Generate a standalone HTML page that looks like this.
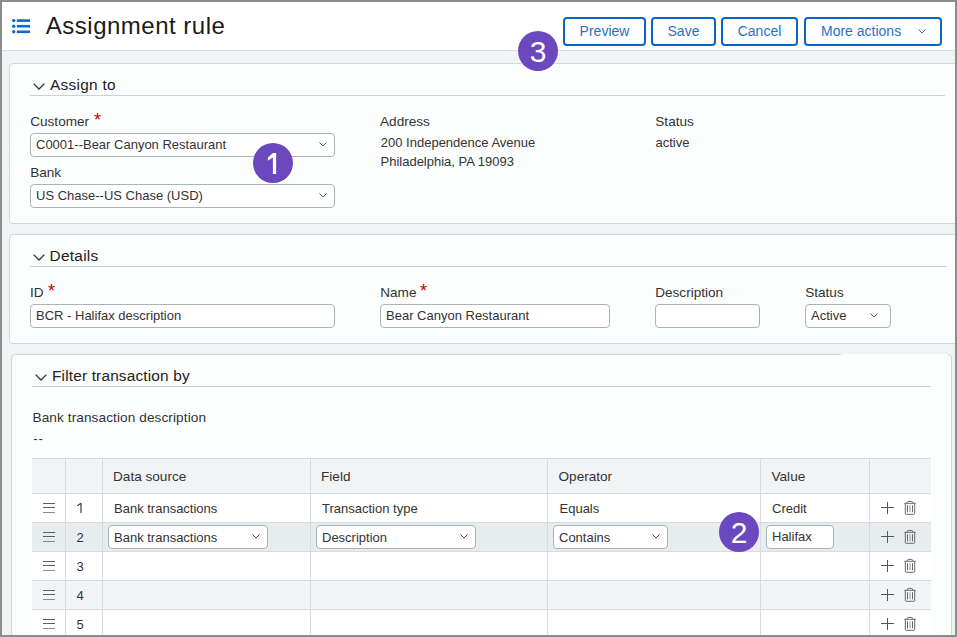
<!DOCTYPE html>
<html><head><meta charset="utf-8"><style>
html,body{margin:0;padding:0;width:957px;height:637px;overflow:hidden;font-family:"Liberation Sans", sans-serif;}
.t{position:absolute;white-space:nowrap;line-height:1;}
.btn{position:absolute;height:29px;box-sizing:border-box;border:2px solid #0a66c2;border-radius:4px;background:#fff;color:#2a6fc2;font-size:14px;line-height:25px;text-align:center;}
.badge{position:absolute;width:40px;height:40px;border-radius:50%;background:#6b48bd;color:#fff;font-size:30px;line-height:42px;text-align:center;}
.ast{position:absolute;color:#c40000;font-size:18px;line-height:18px;margin-top:1px;}
</style></head><body>
<div style="position:absolute;left:0;top:0;width:957px;height:637px;background:#f1f4f5"></div>
<div style="position:absolute;left:0px;top:0px;width:957px;height:51px;box-sizing:border-box;background:#fff;border-bottom:1px solid #d9dfe3;"></div>
<div style="position:absolute;left:10px;top:16px;width:22px;height:20px;line-height:0"><svg width="22" height="20"><circle cx="3.75" cy="4.60" r="1.7" fill="#0b6bc8"/><rect x="6.8" y="3.30" width="13.2" height="2.6" fill="#0b6bc8"/><circle cx="3.75" cy="10.20" r="1.7" fill="#0b6bc8"/><rect x="6.8" y="8.90" width="13.2" height="2.6" fill="#0b6bc8"/><circle cx="3.75" cy="15.80" r="1.7" fill="#0b6bc8"/><rect x="6.8" y="14.50" width="13.2" height="2.6" fill="#0b6bc8"/></svg></div>
<div class="t" style="left:45.8px;top:13.68px;font-size:24px;color:#1b1b1b;letter-spacing:0.5px">Assignment rule</div>
<div class="btn" style="left:563px;top:17px;width:83px;">Preview</div>
<div class="btn" style="left:651px;top:17px;width:65px;">Save</div>
<div class="btn" style="left:721px;top:17px;width:77px;">Cancel</div>
<div class="btn" style="left:804px;top:17px;width:138px;text-align:left;padding-left:15px;">More actions</div>
<div style="position:absolute;left:918px;top:28.5px;width:8px;height:5px;line-height:0"><svg width="8" height="5" viewBox="0 0 8 5"><path d="M0.5 0.5 L4 4 L7.5 0.5" fill="none" stroke="#2f6fbf" stroke-width="1"/></svg></div>
<div style="position:absolute;left:9px;top:63px;width:1000px;height:161px;box-sizing:border-box;background:#fcfdfd;border:1px solid #cfd8dc;border-radius:4px;"></div>
<div style="position:absolute;left:33px;top:83px;width:12px;height:7px;line-height:0"><svg width="12" height="7" viewBox="0 0 12 7"><path d="M0.6 0.6 L6 6 L11.4 0.6" fill="none" stroke="#333" stroke-width="1.3"/></svg></div>
<div class="t" style="left:50px;top:76.96px;font-size:15.4px;color:#222;letter-spacing:0.28px">Assign to</div>
<div style="position:absolute;left:30px;top:95px;width:915px;height:1px;box-sizing:border-box;background:#c9d2d8;"></div>
<div class="t" style="left:30.2px;top:114.69px;font-size:13.6px;color:#333;">Customer</div>
<div class="ast" style="left:94px;top:110px">*</div>
<div style="position:absolute;left:30px;top:133px;width:305px;height:24px;box-sizing:border-box;background:#fff;border:1px solid #a9b3ba;border-radius:4px;"></div>
<div class="t" style="left:36px;top:138.00px;font-size:13px;color:#333;">C0001--Bear Canyon Restaurant</div>
<div style="position:absolute;left:318.7px;top:142px;width:8px;height:5px;line-height:0"><svg width="8" height="5" viewBox="0 0 8 5"><path d="M0.5 0.5 L4 4 L7.5 0.5" fill="none" stroke="#555" stroke-width="1"/></svg></div>
<div class="t" style="left:30.2px;top:166.29px;font-size:13.6px;color:#333;">Bank</div>
<div style="position:absolute;left:30px;top:184px;width:305px;height:24px;box-sizing:border-box;background:#fff;border:1px solid #a9b3ba;border-radius:4px;"></div>
<div class="t" style="left:36px;top:189.00px;font-size:13px;color:#333;">US Chase--US Chase (USD)</div>
<div style="position:absolute;left:318.7px;top:193px;width:8px;height:5px;line-height:0"><svg width="8" height="5" viewBox="0 0 8 5"><path d="M0.5 0.5 L4 4 L7.5 0.5" fill="none" stroke="#555" stroke-width="1"/></svg></div>
<div class="t" style="left:380px;top:114.69px;font-size:13.6px;color:#333;">Address</div>
<div class="t" style="left:380.8px;top:135.50px;font-size:13px;color:#333;">200 Independence Avenue</div>
<div class="t" style="left:380.5px;top:155.00px;font-size:13px;color:#333;">Philadelphia, PA 19093</div>
<div class="t" style="left:655.3px;top:114.69px;font-size:13.6px;color:#333;">Status</div>
<div class="t" style="left:655.5px;top:135.50px;font-size:13px;color:#333;">active</div>
<div style="position:absolute;left:9px;top:234px;width:1000px;height:110px;box-sizing:border-box;background:#fcfdfd;border:1px solid #cfd8dc;border-radius:4px;"></div>
<div style="position:absolute;left:33px;top:254px;width:12px;height:7px;line-height:0"><svg width="12" height="7" viewBox="0 0 12 7"><path d="M0.6 0.6 L6 6 L11.4 0.6" fill="none" stroke="#333" stroke-width="1.3"/></svg></div>
<div class="t" style="left:49.5px;top:247.96px;font-size:15.4px;color:#222;letter-spacing:0.28px">Details</div>
<div style="position:absolute;left:30px;top:266px;width:917px;height:1px;box-sizing:border-box;background:#c9d2d8;"></div>
<div class="t" style="left:30px;top:286.29px;font-size:13.6px;color:#333;">ID</div>
<div class="ast" style="left:48px;top:281px">*</div>
<div style="position:absolute;left:30px;top:304px;width:305px;height:24px;box-sizing:border-box;background:#fff;border:1px solid #a9b3ba;border-radius:4px;"></div>
<div class="t" style="left:36px;top:309.00px;font-size:13px;color:#333;">BCR - Halifax description</div>
<div class="t" style="left:380.2px;top:286.29px;font-size:13.6px;color:#333;">Name</div>
<div class="ast" style="left:420px;top:281px">*</div>
<div style="position:absolute;left:380px;top:304px;width:230px;height:24px;box-sizing:border-box;background:#fff;border:1px solid #a9b3ba;border-radius:4px;"></div>
<div class="t" style="left:386px;top:309.00px;font-size:13px;color:#333;">Bear Canyon Restaurant</div>
<div class="t" style="left:655.2px;top:286.29px;font-size:13.6px;color:#333;">Description</div>
<div style="position:absolute;left:655px;top:304px;width:105px;height:24px;box-sizing:border-box;background:#fff;border:1px solid #a9b3ba;border-radius:4px;"></div>
<div class="t" style="left:805.2px;top:286.29px;font-size:13.6px;color:#333;">Status</div>
<div style="position:absolute;left:805px;top:304px;width:86px;height:24px;box-sizing:border-box;background:#fff;border:1px solid #a9b3ba;border-radius:4px;"></div>
<div class="t" style="left:811px;top:309.00px;font-size:13px;color:#333;">Active</div>
<div style="position:absolute;left:870.2px;top:313px;width:8px;height:5px;line-height:0"><svg width="8" height="5" viewBox="0 0 8 5"><path d="M0.5 0.5 L4 4 L7.5 0.5" fill="none" stroke="#555" stroke-width="1"/></svg></div>
<div style="position:absolute;left:11px;top:354px;width:941px;height:400px;box-sizing:border-box;background:#fcfdfd;border:1px solid #cfd8dc;border-radius:4px;"></div>
<div style="position:absolute;left:841px;top:354px;width:107px;height:1px;box-sizing:border-box;background:#fcfdfd;"></div>
<div style="position:absolute;left:35px;top:374px;width:12px;height:7px;line-height:0"><svg width="12" height="7" viewBox="0 0 12 7"><path d="M0.6 0.6 L6 6 L11.4 0.6" fill="none" stroke="#333" stroke-width="1.3"/></svg></div>
<div class="t" style="left:52px;top:367.96px;font-size:15.4px;color:#222;letter-spacing:0.17px">Filter transaction by</div>
<div style="position:absolute;left:32px;top:386px;width:899px;height:1px;box-sizing:border-box;background:#c9d2d8;"></div>
<div class="t" style="left:32.5px;top:410.89px;font-size:13.6px;color:#333;letter-spacing:0.1px">Bank transaction description</div>
<div class="t" style="left:33.3px;top:432.00px;font-size:13px;color:#333;letter-spacing:0.8px">--</div>
<div style="position:absolute;left:32px;top:458px;width:899px;height:36px;box-sizing:border-box;background:#f1f3f5;border-top:1px solid #d5dbe0;border-bottom:1px solid #d5dbe0;"></div>
<div style="position:absolute;left:32px;top:494px;width:899px;height:29px;box-sizing:border-box;background:#fff;border-bottom:1px solid #d5dbe0;"></div>
<div style="position:absolute;left:32px;top:523px;width:899px;height:29px;box-sizing:border-box;background:#e7ecef;border-bottom:1px solid #d5dbe0;"></div>
<div style="position:absolute;left:32px;top:552px;width:899px;height:29px;box-sizing:border-box;background:#fff;border-bottom:1px solid #d5dbe0;"></div>
<div style="position:absolute;left:32px;top:581px;width:899px;height:29px;box-sizing:border-box;background:#f2f4f6;border-bottom:1px solid #d5dbe0;"></div>
<div style="position:absolute;left:32px;top:610px;width:899px;height:29px;box-sizing:border-box;background:#fff;border-bottom:1px solid #d5dbe0;"></div>
<div style="position:absolute;left:65px;top:458px;width:1px;height:179px;box-sizing:border-box;background:#d5dbe0;"></div>
<div style="position:absolute;left:102px;top:458px;width:1px;height:179px;box-sizing:border-box;background:#d5dbe0;"></div>
<div style="position:absolute;left:310px;top:458px;width:1px;height:179px;box-sizing:border-box;background:#d5dbe0;"></div>
<div style="position:absolute;left:547px;top:458px;width:1px;height:179px;box-sizing:border-box;background:#d5dbe0;"></div>
<div style="position:absolute;left:760px;top:458px;width:1px;height:179px;box-sizing:border-box;background:#d5dbe0;"></div>
<div style="position:absolute;left:869px;top:458px;width:1px;height:179px;box-sizing:border-box;background:#d5dbe0;"></div>
<div class="t" style="left:113px;top:470.09px;font-size:13.6px;color:#333;">Data source</div>
<div class="t" style="left:321px;top:470.09px;font-size:13.6px;color:#333;">Field</div>
<div class="t" style="left:558.5px;top:470.09px;font-size:13.6px;color:#333;">Operator</div>
<div class="t" style="left:771.5px;top:470.09px;font-size:13.6px;color:#333;">Value</div>
<div style="position:absolute;left:43px;top:503px;width:12px;height:1px;box-sizing:border-box;background:#5e5e5e;"></div>
<div style="position:absolute;left:43px;top:507px;width:12px;height:1px;box-sizing:border-box;background:#5e5e5e;"></div>
<div style="position:absolute;left:43px;top:512px;width:12px;height:1px;box-sizing:border-box;background:#8a8a8a;"></div>
<div style="position:absolute;left:70px;top:498px;width:20px;height:20px;line-height:0"><svg width="20" height="20"><path d="M11.0 5 V15 M7.2 7.9 L11.0 5.2" fill="none" stroke="#333" stroke-width="1.15"/></svg></div>
<div style="position:absolute;left:881.3px;top:507px;width:12.5px;height:1px;box-sizing:border-box;background:#555;"></div>
<div style="position:absolute;left:887px;top:502px;width:1px;height:12px;box-sizing:border-box;background:#555;"></div>
<div style="position:absolute;left:903px;top:500px;width:14px;height:15px;line-height:0"><svg width="14" height="15" viewBox="0 0 14 15"><path d="M1.3 3.3 H12.7 M3.9 3.2 Q4.3 1.4 5.8 1.4 H8.2 Q9.7 1.4 10.1 3.2 M2.3 3.3 V13.4 Q2.3 14.3 3.2 14.3 H10.8 Q11.7 14.3 11.7 13.4 V3.3 M4.5 5.2 V12.3 M9.5 5.2 V12.3" fill="none" stroke="#6a6a6a" stroke-width="1"/><path d="M7 5.2 V12.3" stroke="#aaa" stroke-width="1.2"/></svg></div>
<div style="position:absolute;left:43px;top:532px;width:12px;height:1px;box-sizing:border-box;background:#5e5e5e;"></div>
<div style="position:absolute;left:43px;top:536px;width:12px;height:1px;box-sizing:border-box;background:#5e5e5e;"></div>
<div style="position:absolute;left:43px;top:541px;width:12px;height:1px;box-sizing:border-box;background:#8a8a8a;"></div>
<div class="t" style="left:76.5px;top:531.00px;font-size:13px;color:#333;">2</div>
<div style="position:absolute;left:881.3px;top:536px;width:12.5px;height:1px;box-sizing:border-box;background:#555;"></div>
<div style="position:absolute;left:887px;top:531px;width:1px;height:12px;box-sizing:border-box;background:#555;"></div>
<div style="position:absolute;left:903px;top:529px;width:14px;height:15px;line-height:0"><svg width="14" height="15" viewBox="0 0 14 15"><path d="M1.3 3.3 H12.7 M3.9 3.2 Q4.3 1.4 5.8 1.4 H8.2 Q9.7 1.4 10.1 3.2 M2.3 3.3 V13.4 Q2.3 14.3 3.2 14.3 H10.8 Q11.7 14.3 11.7 13.4 V3.3 M4.5 5.2 V12.3 M9.5 5.2 V12.3" fill="none" stroke="#6a6a6a" stroke-width="1"/><path d="M7 5.2 V12.3" stroke="#aaa" stroke-width="1.2"/></svg></div>
<div style="position:absolute;left:43px;top:561px;width:12px;height:1px;box-sizing:border-box;background:#5e5e5e;"></div>
<div style="position:absolute;left:43px;top:565px;width:12px;height:1px;box-sizing:border-box;background:#5e5e5e;"></div>
<div style="position:absolute;left:43px;top:570px;width:12px;height:1px;box-sizing:border-box;background:#8a8a8a;"></div>
<div class="t" style="left:76.5px;top:560.00px;font-size:13px;color:#333;">3</div>
<div style="position:absolute;left:881.3px;top:565px;width:12.5px;height:1px;box-sizing:border-box;background:#555;"></div>
<div style="position:absolute;left:887px;top:560px;width:1px;height:12px;box-sizing:border-box;background:#555;"></div>
<div style="position:absolute;left:903px;top:558px;width:14px;height:15px;line-height:0"><svg width="14" height="15" viewBox="0 0 14 15"><path d="M1.3 3.3 H12.7 M3.9 3.2 Q4.3 1.4 5.8 1.4 H8.2 Q9.7 1.4 10.1 3.2 M2.3 3.3 V13.4 Q2.3 14.3 3.2 14.3 H10.8 Q11.7 14.3 11.7 13.4 V3.3 M4.5 5.2 V12.3 M9.5 5.2 V12.3" fill="none" stroke="#6a6a6a" stroke-width="1"/><path d="M7 5.2 V12.3" stroke="#aaa" stroke-width="1.2"/></svg></div>
<div style="position:absolute;left:43px;top:590px;width:12px;height:1px;box-sizing:border-box;background:#5e5e5e;"></div>
<div style="position:absolute;left:43px;top:594px;width:12px;height:1px;box-sizing:border-box;background:#5e5e5e;"></div>
<div style="position:absolute;left:43px;top:599px;width:12px;height:1px;box-sizing:border-box;background:#8a8a8a;"></div>
<div class="t" style="left:76.5px;top:589.00px;font-size:13px;color:#333;">4</div>
<div style="position:absolute;left:881.3px;top:594px;width:12.5px;height:1px;box-sizing:border-box;background:#555;"></div>
<div style="position:absolute;left:887px;top:589px;width:1px;height:12px;box-sizing:border-box;background:#555;"></div>
<div style="position:absolute;left:903px;top:587px;width:14px;height:15px;line-height:0"><svg width="14" height="15" viewBox="0 0 14 15"><path d="M1.3 3.3 H12.7 M3.9 3.2 Q4.3 1.4 5.8 1.4 H8.2 Q9.7 1.4 10.1 3.2 M2.3 3.3 V13.4 Q2.3 14.3 3.2 14.3 H10.8 Q11.7 14.3 11.7 13.4 V3.3 M4.5 5.2 V12.3 M9.5 5.2 V12.3" fill="none" stroke="#6a6a6a" stroke-width="1"/><path d="M7 5.2 V12.3" stroke="#aaa" stroke-width="1.2"/></svg></div>
<div style="position:absolute;left:43px;top:619px;width:12px;height:1px;box-sizing:border-box;background:#5e5e5e;"></div>
<div style="position:absolute;left:43px;top:623px;width:12px;height:1px;box-sizing:border-box;background:#5e5e5e;"></div>
<div style="position:absolute;left:43px;top:628px;width:12px;height:1px;box-sizing:border-box;background:#8a8a8a;"></div>
<div class="t" style="left:76.5px;top:618.00px;font-size:13px;color:#333;">5</div>
<div style="position:absolute;left:881.3px;top:623px;width:12.5px;height:1px;box-sizing:border-box;background:#555;"></div>
<div style="position:absolute;left:887px;top:618px;width:1px;height:12px;box-sizing:border-box;background:#555;"></div>
<div style="position:absolute;left:903px;top:616px;width:14px;height:15px;line-height:0"><svg width="14" height="15" viewBox="0 0 14 15"><path d="M1.3 3.3 H12.7 M3.9 3.2 Q4.3 1.4 5.8 1.4 H8.2 Q9.7 1.4 10.1 3.2 M2.3 3.3 V13.4 Q2.3 14.3 3.2 14.3 H10.8 Q11.7 14.3 11.7 13.4 V3.3 M4.5 5.2 V12.3 M9.5 5.2 V12.3" fill="none" stroke="#6a6a6a" stroke-width="1"/><path d="M7 5.2 V12.3" stroke="#aaa" stroke-width="1.2"/></svg></div>
<div class="t" style="left:114px;top:502.00px;font-size:13px;color:#333;">Bank transactions</div>
<div class="t" style="left:322px;top:502.00px;font-size:13px;color:#333;">Transaction type</div>
<div class="t" style="left:559.5px;top:502.00px;font-size:13px;color:#333;">Equals</div>
<div class="t" style="left:772px;top:502.00px;font-size:13px;color:#333;">Credit</div>
<div style="position:absolute;left:108px;top:525px;width:160px;height:24px;box-sizing:border-box;background:#fff;border:1px solid #a9b3ba;border-radius:4px;"></div>
<div class="t" style="left:114px;top:531.20px;font-size:13px;color:#333;">Bank transactions</div>
<div style="position:absolute;left:251.7px;top:534px;width:8px;height:5px;line-height:0"><svg width="8" height="5" viewBox="0 0 8 5"><path d="M0.5 0.5 L4 4 L7.5 0.5" fill="none" stroke="#555" stroke-width="1"/></svg></div>
<div style="position:absolute;left:316px;top:525px;width:160px;height:24px;box-sizing:border-box;background:#fff;border:1px solid #a9b3ba;border-radius:4px;"></div>
<div class="t" style="left:322px;top:531.20px;font-size:13px;color:#333;">Description</div>
<div style="position:absolute;left:459.7px;top:534px;width:8px;height:5px;line-height:0"><svg width="8" height="5" viewBox="0 0 8 5"><path d="M0.5 0.5 L4 4 L7.5 0.5" fill="none" stroke="#555" stroke-width="1"/></svg></div>
<div style="position:absolute;left:553px;top:525px;width:115px;height:24px;box-sizing:border-box;background:#fff;border:1px solid #a9b3ba;border-radius:4px;"></div>
<div class="t" style="left:559px;top:531.20px;font-size:13px;color:#333;">Contains</div>
<div style="position:absolute;left:651.7px;top:534px;width:8px;height:5px;line-height:0"><svg width="8" height="5" viewBox="0 0 8 5"><path d="M0.5 0.5 L4 4 L7.5 0.5" fill="none" stroke="#555" stroke-width="1"/></svg></div>
<div style="position:absolute;left:766px;top:525px;width:68px;height:24px;box-sizing:border-box;background:#fff;border:1px solid #a9b3ba;border-radius:4px;"></div>
<div class="t" style="left:772px;top:530.20px;font-size:13px;color:#333;">Halifax</div>
<div class="badge" style="left:253px;top:143px;line-height:0"><svg width="40" height="40"><polygon points="23.15,10.00 23.15,31.00 19.90,31.00 19.90,14.60 14.90,17.70 14.90,14.60 20.00,10.00" fill="#fff"/></svg></div>
<div class="badge" style="left:719px;top:512px;">2</div>
<div class="badge" style="left:518px;top:31px;">3</div>
<div style="position:absolute;left:0;top:0;width:957px;height:637px;box-sizing:border-box;border:2px solid #8c8c8c"></div>
</body></html>
